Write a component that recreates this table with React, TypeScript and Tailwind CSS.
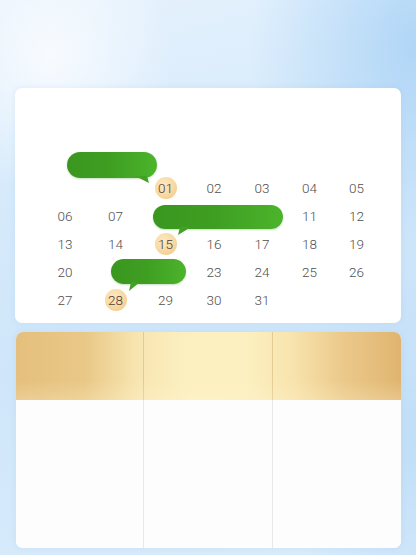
import React from "react";

const rows: (string | null)[][] = [
  [null, null, "01", "02", "03", "04", "05"],
  ["06", "07", null, null, null, "11", "12"],
  ["13", "14", "15", "16", "17", "18", "19"],
  ["20", null, null, "23", "24", "25", "26"],
  ["27", "28", "29", "30", "31", null, null],
];

const marked = new Set(["01", "15", "28"]);

function Bubble({
  left,
  top,
  w,
  h,
  tail,
}: {
  left: string;
  top: string;
  w: string;
  h: string;
  tail: string;
}) {
  return (
    <div className={`absolute ${left} ${top} ${w} ${h}`}>
      <div className="absolute inset-0 rounded-full bg-[linear-gradient(90deg,#3a961f_0%,#3f9f22_50%,#4cb42b_100%)] shadow-[0_1px_2px_rgba(40,120,20,0.25)]" />
      <svg className="absolute left-0 top-0 overflow-visible" width="1" height="1">
        <polygon points={tail} fill="#41a124" />
      </svg>
    </div>
  );
}

export default function App() {
  return (
    <div
      className="relative w-[416px] h-[555px] overflow-hidden bg-[linear-gradient(170deg,#e6f2fd_0%,#d6eafb_30%,#cfe6fa_60%,#d9ecfb_100%)]"
      style={{ fontFamily: "Roboto, 'Open Sans', sans-serif" }}
    >
      <div className="absolute inset-0 bg-[radial-gradient(ellipse_30%_25%_at_12%_10%,rgba(250,252,255,0.9)_0%,rgba(250,252,255,0)_100%)]" />
      <div className="absolute inset-0 bg-[radial-gradient(ellipse_40%_40%_at_100%_8%,rgba(165,208,245,0.8)_0%,rgba(165,208,245,0)_100%)]" />
      <div className="absolute inset-0 bg-[radial-gradient(ellipse_30%_40%_at_100%_80%,rgba(180,215,245,0.6)_0%,rgba(180,215,245,0)_100%)]" />
      <div className="relative flex flex-col pt-[88px] pl-[15px] pr-[15px] gap-[9px]">
        {/* Calendar card */}
        <div className="relative w-[386px] h-[235px] rounded-[7px] bg-white pt-[86px] pl-[25px] shadow-[0_0_6px_rgba(120,170,220,0.15)]">
          <div className="grid grid-cols-[50px_51px_49px_48px_48px_47px_47px] grid-rows-[repeat(5,28px)] text-[13.5px] font-light text-[#505050]">
            {rows.flat().map((d, i) => (
              <div key={i} className="flex items-center justify-center">
                {d &&
                  (marked.has(d) ? (
                    <span className="flex h-[22px] w-[22px] items-center justify-center rounded-full bg-[radial-gradient(circle_at_40%_35%,#fde9c4_0%,#f8d8a0_55%,#f0c27f_100%)] text-[#4a4030]">
                      {d}
                    </span>
                  ) : (
                    <span>{d}</span>
                  ))}
              </div>
            ))}
          </div>
          <Bubble left="left-[52px]" top="top-[64px]" w="w-[90px]" h="h-[26px]" tail="68,24 80,24 82,31" />
          <Bubble left="left-[138px]" top="top-[117px]" w="w-[130px]" h="h-[24px]" tail="27,22 38,22 25,30" />
          <Bubble left="left-[96px]" top="top-[171px]" w="w-[75px]" h="h-[25px]" tail="20,23 29,23 18,32" />
        </div>

        {/* Table card */}
        <div className="ml-px w-[385px] h-[216px] rounded-[7px] bg-white overflow-hidden flex flex-col shadow-[0_0_6px_rgba(120,170,220,0.15)]">
          <div className="relative h-[68px] grid grid-cols-3 bg-[linear-gradient(90deg,#e5bf7d_0%,#e9c887_18%,#f8e6b2_32%,#fcf0c1_45%,#fcf0c0_60%,#f8e3ad_72%,#ebc98a_85%,#e0b470_100%)]">
            <div className="border-r border-[rgba(190,150,80,0.35)]" />
            <div className="border-r border-[rgba(190,150,80,0.35)]" />
            <div />
            <div className="pointer-events-none absolute inset-x-0 bottom-0 h-[20px] bg-[linear-gradient(180deg,rgba(255,245,210,0)_0%,rgba(255,245,210,0.25)_100%)]" />
          </div>
          <div className="flex-1 grid grid-cols-3 bg-[#fdfdfd]">
            <div className="border-r border-[#e8e8e8]" />
            <div className="border-r border-[#e8e8e8]" />
            <div />
          </div>
        </div>
      </div>
    </div>
  );
}
